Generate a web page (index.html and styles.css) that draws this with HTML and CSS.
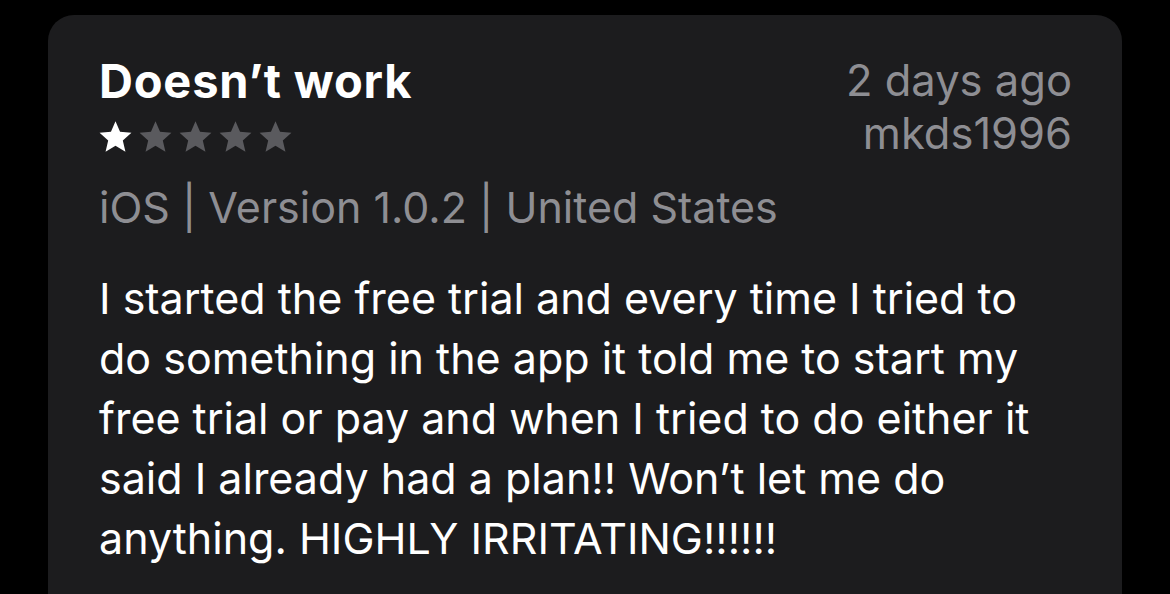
FILE: index.html
```html
<!DOCTYPE html>
<html lang="en">
<head>
<meta charset="utf-8">
<title>Review</title>
<link rel="stylesheet" href="styles.css">
</head>
<body>
<div class="card">
  <div class="header">
    <div class="left">
      <div class="title">Doesn’t work</div>
      <div class="stars">
        <svg class="star on" viewBox="1 0.6 22 21.2"><path d="M12 0.8l3.1 7.2 7.8 0.7-5.9 5.2 1.8 7.7L12 17.5l-6.8 4.1 1.8-7.7L1.1 8.7l7.8-0.7z"/></svg>
        <svg class="star" viewBox="1 0.6 22 21.2"><path d="M12 0.8l3.1 7.2 7.8 0.7-5.9 5.2 1.8 7.7L12 17.5l-6.8 4.1 1.8-7.7L1.1 8.7l7.8-0.7z"/></svg>
        <svg class="star" viewBox="1 0.6 22 21.2"><path d="M12 0.8l3.1 7.2 7.8 0.7-5.9 5.2 1.8 7.7L12 17.5l-6.8 4.1 1.8-7.7L1.1 8.7l7.8-0.7z"/></svg>
        <svg class="star" viewBox="1 0.6 22 21.2"><path d="M12 0.8l3.1 7.2 7.8 0.7-5.9 5.2 1.8 7.7L12 17.5l-6.8 4.1 1.8-7.7L1.1 8.7l7.8-0.7z"/></svg>
        <svg class="star" viewBox="1 0.6 22 21.2"><path d="M12 0.8l3.1 7.2 7.8 0.7-5.9 5.2 1.8 7.7L12 17.5l-6.8 4.1 1.8-7.7L1.1 8.7l7.8-0.7z"/></svg>
      </div>
    </div>
    <div class="right">
      <div class="date">2 days ago</div>
      <div class="author">mkds1996</div>
    </div>
  </div>
  <div class="meta">iOS | Version 1.0.2 | United States</div>
  <p class="body">I started the free trial and every time I tried to do something in the app it told me to start my free trial or pay and when I tried to do either it said I already had a plan!! Won’t let me do anything. HIGHLY IRRITATING!!!!!!</p>
</div>
</body>
</html>
```

FILE: styles.css
```css
html, body {
  margin: 0;
  padding: 0;
  background: #000;
  height: 100%;
  overflow: hidden;
}
body {
  font-family: Inter, "Noto Sans", "Liberation Sans", sans-serif;
  color: #fff;
}
.card {
  margin: 15px 0 0 48px;
  width: 1074px;
  height: 700px;
  box-sizing: border-box;
  background: #1c1c1e;
  border-radius: 26px;
  padding: 39px 50px 0 51px;
}
.header {
  display: flex;
  justify-content: space-between;
  align-items: flex-start;
}
.title {
  font-size: 47px;
  font-weight: 700;
  line-height: 53px;
  letter-spacing: 0.8px;
}
.stars {
  display: flex;
  gap: 7px;
  margin-top: 14px;
}
.star {
  width: 33px;
  height: 31px;
  fill: #5a5a5e;
  display: block;
}
.star.on {
  fill: #fff;
}
.right {
  text-align: right;
  color: #8e8e93;
  font-size: 43.5px;
  line-height: 53px;
}
.meta {
  color: #8e8e93;
  font-size: 43px;
  line-height: 53px;
  margin-top: 21px;
}
.body {
  margin: 34px 0 0 0;
  font-size: 43px;
  line-height: 60px;
}
```
